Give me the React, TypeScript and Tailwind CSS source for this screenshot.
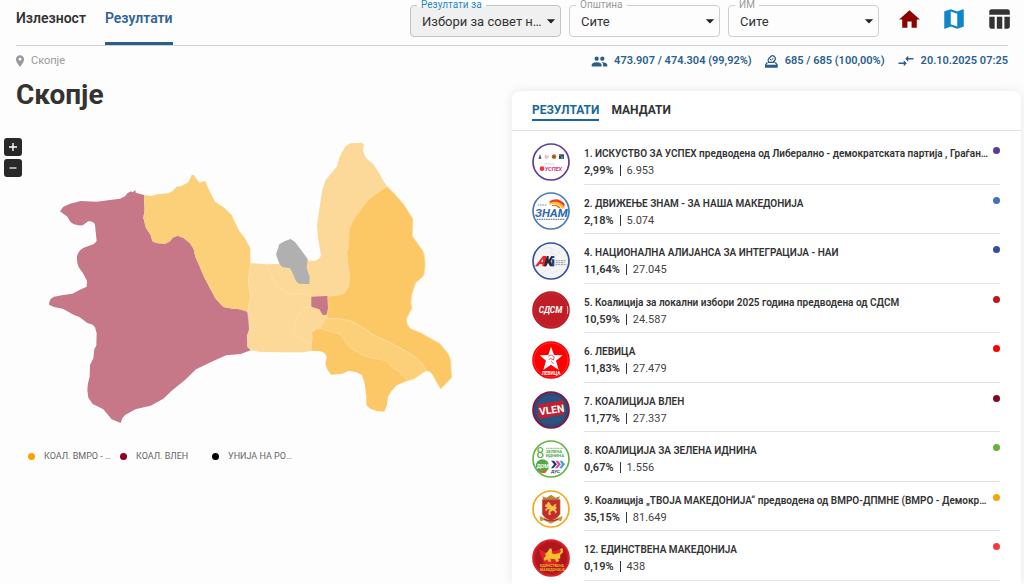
import type { ReactNode } from "react";
import {
  MdArrowDropDown,
  MdCompareArrows,
  MdHome,
  MdLocationOn,
  MdMap,
  MdPeople,
  MdTableChart,
} from "react-icons/md";

type FilterProps = {
  id: string;
  label: string;
  value: string;
  active?: boolean;
};

function Filter({ id, label, value, active = false }: FilterProps) {
  return (
    <div className="relative w-[151px]">
      <label
        htmlFor={id}
        className={`absolute -top-2 left-[7px] px-1 text-[10px] leading-4 ${
          active ? "text-[#1c87c9]" : "text-[#9a9a9a]"
        }`}
      >
        <span className="absolute inset-x-0 top-[7px] h-[3px] bg-[#fdfdfd]" />
        <span className="relative">{label}</span>
      </label>
      <select
        id={id}
        className={`block h-8 w-full appearance-none text-ellipsis rounded border pl-[11px] pr-[18px] pt-[2px] text-[13px] text-[#333] ${
          active ? "border-[#c4c4c4] bg-[#f0f0f0]" : "border-[#cfcfcf] bg-[#fdfdfd]"
        }`}
      >
        <option>{value}</option>
      </select>
      <MdArrowDropDown
        size={20}
        className="pointer-events-none absolute right-0 top-[6px] text-[#222]"
      />
    </div>
  );
}

function BallotIcon() {
  return (
    <svg viewBox="0 0 45 45" className="size-[15px]" fill="none" stroke="currentColor" strokeWidth="4">
      <path d="M14 25Q10 19 14 14L22 6Q26 3 30 7L33 10Q36 14 33 18L27 25" />
      <path strokeWidth="3" d="M18 15L22 19L28 12" />
      <path d="M10 25L5 33V35H39V33L34 25" />
      <path d="M12 25H32" />
      <path fill="currentColor" d="M5 34H39V39H5Z" />
    </svg>
  );
}

function Stat({ icon, children }: { icon: ReactNode; children: ReactNode }) {
  return (
    <div className="flex items-center gap-[6px]">
      {icon}
      <span>{children}</span>
    </div>
  );
}

function RegionMap() {
  return (
    <svg
      viewBox="0 0 1320 900"
      role="img"
      aria-label="Скопје"
      className="ml-[30px] block w-[440px] max-w-full"
      strokeLinejoin="round"
    >
      <path
        fill="#c67788"
        d="M90 244L100 230L120 221L152 213L200 215L240 210L270 206L285 199L293 189L303 184L308 187L316 180L317 188L342 195L344 240L340 263L348 294L362 315L367 333L378 339L405 341L418 335L430 322L444 317L462 325L480 340L491 357L496 380L508 407L522 440L540 475L557 506L580 531L600 535L630 538L653 545L658 575L657 600L652 618L653 648L662 661L632 672L588 676L545 695L498 718L465 750L425 782L400 806L362 827L318 837L285 855L277 865L272 879L245 868L220 838L188 822L175 803L172 780L174 760L179 740L180 705L190 685L193 657L199 647L200 610L195 592L188 584L172 579L148 561L132 555L98 536L72 531L57 524Q58 505 72 500L95 496L127 491L150 479L170 470L171 452L158 428L146 412Q138 390 142 375Q148 358 165 352L192 342L200 333L195 285Q192 273 175 274L158 286Q130 288 120 274L112 260Z"
      />
      <path
        fill="#fccf79"
        d="M342 195L363 198L382 193L415 190L428 183L440 170L455 168L476 156L485 135L491 135L508 158L526 153L536 178L555 215L580 231L605 255L627 302L645 325L661 355L661 400L655 455L661 500L658 535L653 545L630 538L600 535L580 531L557 506L540 475L522 440L508 407L496 380L491 357L480 340L462 325L444 317L430 322L418 335L405 341L378 339L367 333L362 315L348 294L340 263L344 240Z"
      />
      <g transform="translate(600 0)">
        <path
          fill="#fcd999"
          d="M61 399L108 403L145 402L233 391L250 393Q270 390 273 375L264 325L261 285L272 210L277 180L287 150L320 110L328 82L345 50Q355 40 370 39L396 38L403 44L399 52Q398 70 412 88L430 103L447 128L455 145L472 170L400 300L380 480L300 560L272 597L250 600L247 630L243 663L220 667L150 667L90 665L62 661L53 652L52 615L59 600L57 560L53 545L61 500L55 455Z"
        />
        <path
          fill="#fcc866"
          stroke="#fddc9f"
          strokeWidth="2"
          d="M472 170L495 193L520 222L549 267L547 318L578 362Q585 375 585 400Q586 435 575 443L557 458L545 495L543 518L546 535L531 563Q527 585 542 596L575 610L630 641L655 672L662 690L665 743L632 777L622 760L608 735L600 725L588 722L575 700Q560 682 535 668L490 643L430 615L400 593L365 574L330 567L290 565L294 540L293 499Q320 497 342 491Q352 480 358 462L359 430L353 400L351 365L355 350L358 295Q375 255 420 205Q440 188 472 170Z"
        />
        <path
          fill="#fccf79"
          stroke="#fddc9f"
          strokeWidth="2"
          d="M290 565L330 567L365 574L400 593L430 615L490 643L535 668Q560 682 575 700L588 722L550 748L532 752L510 728L485 712L470 693L435 686L405 680L360 655L330 615L315 609L272 597Q275 580 290 565Z"
        />
        <path
          fill="#fcc866"
          d="M272 597Q255 595 247 607L247 630L243 662L265 663Q288 665 290 682L286 700Q290 722 304 734L338 731L355 722L380 727L395 735L403 755L409 800L409 825L418 835L440 843L463 845L470 828L474 800L485 782L500 766L532 752L510 728L485 712L470 693L435 686L405 680L360 655L330 615L315 609Z"
        />
        <path
          fill="#b0b0b0"
          d="M182 327L195 336L215 362L233 387L230 415L239 440L238 462L208 461Q200 458 195 447L186 425L180 415L157 411Q147 405 138 373L148 343L165 333Z"
        />
        <path
          fill="#c67788"
          d="M244 500L292 498L294 535L290 554L278 555L268 538L244 530Z"
        />
        <path
          fill="none"
          stroke="#fde2b1"
          strokeWidth="2"
          d="M108 403L122 432Q140 470 155 479L178 491L220 490L244 500M244 530L220 535Q205 545 203 560L190 595Q188 612 205 622L243 640M61 399L55 455L61 500L53 545L59 600L52 615L53 652"
        />
      </g>
    </svg>
  );
}

const logoText = "font-['Roboto'] font-bold";

function Badge({ fill, ring, children }: { fill: string; ring: string; children: ReactNode }) {
  return (
    <svg viewBox="0 0 114 114" className="mt-1 size-[38px] shrink-0" aria-hidden="true">
      <circle cx="57" cy="57" r="54" fill={fill} stroke={ring} strokeWidth="5" />
      {children}
    </svg>
  );
}

const lion =
  "M38 35L43 27L50 30L53 39L61 43L68 35L75 38L70 43L76 49L70 57L77 64L70 72L68 64L59 59L51 66L54 75L45 76L44 64L50 55L40 56L35 63L32 55L42 48L33 46L31 40Z";

const badges: Record<string, ReactNode> = {
  uspeh: (
    <Badge fill="#fff" ring="#5b3a9b">
      <path fill="#55608a" d="M20 44L24 33L28 44V48H20Z" />
      <circle cx="44" cy="41" r="6" fill="#e9a4aa" />
      <path stroke="#fff" strokeWidth="2" fill="none" d="M48 38H43V44H47" />
      <circle cx="66" cy="41" r="7" fill="#c96f25" />
      <circle cx="66" cy="41" r="3" fill="#763e24" />
      <path fill="#26445e" d="M81 34H96V48H81Z" />
      <path fill="#d53e4b" d="M81 34H88V39H81Z" />
      <path fill="#39a4bd" d="M88 40H94V47H85Z" />
      <path stroke="#c8bfdd" strokeWidth="3" strokeDasharray="4 2" d="M37 63H68" />
      <circle cx="30" cy="77" r="7" fill="#ed3545" />
      <text x="38" y="83" fontSize="17" fontStyle="italic" fill="#da3183" className={logoText}>УСПЕХ</text>
    </Badge>
  ),
  znam: (
    <Badge fill="#fff" ring="#4878bc">
      <path fill="#ef3e2e" d="M52 28Q76 12 98 35L96 50Q79 25 54 34Z" />
      <path fill="#ffc623" d="M53 33Q79 22 97 46L92 51Q75 31 51 38Z" />
      <path fill="#ed5a23" d="M59 39Q76 35 88 50L80 48Q72 40 60 42Z" />
      <path stroke="#7392c1" strokeWidth="3" strokeDasharray="5 2" d="M17 39H45" />
      <text x="9" y="74" fontSize="35" fontStyle="italic" fill="#3169ad" className={logoText}>ЗНАМ</text>
      <path stroke="#6689bb" strokeWidth="4" strokeDasharray="5 2" d="M14 82H99" />
    </Badge>
  ),
  nai: (
    <Badge fill="#f4f4f5" ring="#3650a0">
      <path fill="none" stroke="#dfe1e6" strokeWidth="2" d="M30 24Q45 12 62 20L55 32L72 40L84 28M31 94L48 80L61 95L79 83" />
      <path fill="#e7232b" d="M9 73L33 42H42V73H31V66H23L18 73Z" />
      <path fill="#f4f4f5" d="M27 59L33 51V59Z" />
      <path fill="#292831" d="M44 42H50V54L58 42H66L56 57L63 73H54L48 62L43 73H36Z" />
      <path fill="#293f92" d="M59 52H67V73H59ZM59 42H67V48H59Z" />
      <path stroke="#9b9ba3" strokeWidth="3" strokeDasharray="6 2" d="M71 56H101M71 62H98M71 68H104" />
    </Badge>
  ),
  sdsm: (
    <Badge fill="#c01d27" ring="#b91c27">
      <circle cx="57" cy="57" r="50" fill="none" stroke="#d24a4c" strokeWidth="1" />
      <text x="20" y="67" fontSize="25" fontStyle="italic" fill="#fff" className={logoText}>СДСМ</text>
      <path stroke="#f0b9bb" strokeWidth="3" fill="none" d="M106 45Q109 57 106 69" />
    </Badge>
  ),
  levica: (
    <Badge fill="#fe0000" ring="#f90000">
      <circle cx="57" cy="57" r="51" fill="none" stroke="#ff8c8c" strokeWidth="1" />
      <path fill="#fff" d="M57 17L66 42L92 43L72 59L80 87L57 71L34 87L42 59L23 43L49 42Z" />
      <path fill="none" stroke="#f00" strokeWidth="2" d="M49 46L58 42L67 48L64 57L55 52L50 57M57 61L65 68" />
      <text x="29" y="101" fontSize="14" fill="#fff" className={logoText}>ЛЕВИЦА</text>
    </Badge>
  ),
  vlen: (
    <Badge fill="#294b7b" ring="#8c1230">
      <circle cx="57" cy="57" r="44" fill="#315987" opacity=".5" />
      <path fill="#c3202f" d="M17 41L94 28L97 70L20 84Z" />
      <text x="21" y="68" fontSize="31" fill="#fff" transform="rotate(-8 57 57)" className={logoText}>VLEN</text>
    </Badge>
  ),
  zelena: (
    <Badge fill="#fff" ring="#65b33e">
      <text x="13" y="53" fontSize="42" fill="#55ad42" className="font-['Roboto']">8</text>
      <path stroke="#81c36c" strokeWidth="3" strokeDasharray="4 1" d="M42 25H94" />
      <text x="41" y="39" fontSize="13" fill="#4da84b" className={logoText}>ЗЕЛЕНА</text>
      <text x="41" y="51" fontSize="13" fill="#4da84b" className={logoText}>ИДНИНА</text>
      <circle cx="31" cy="78" r="20" fill="#55a849" />
      <text x="14" y="84" fontSize="16" fill="#fff" className={logoText}>ДОМ</text>
      <path fill="#e25c32" d="M22 94L45 91L40 99L29 99Z" />
      <path fill="#263b83" d="M57 62H66L75 73L64 85H57L66 73Z" />
      <path fill="#dd4b9b" d="M70 62H78L87 73L76 85H69L78 73Z" />
      <path fill="#25a8d8" d="M83 62H90L99 73L89 85H82L90 73Z" />
      <text x="57" y="99" fontSize="13" fill="#273b78" className={logoText}>ДУС</text>
    </Badge>
  ),
  vmro: (
    <Badge fill="#fff" ring="#f7a719">
      <path fill="#b88936" d="M31 19L43 23L57 14L71 23L84 19L80 29H34Z" />
      <path fill="#c62a31" stroke="#a56b29" strokeWidth="2" d="M31 29H84V72Q78 85 57 92Q36 85 31 72Z" />
      <g transform="translate(14 14) scale(.8)"><path fill="#f1c44a" d={lion} /></g>
      <path fill="#c39647" d="M23 78L35 83L57 94L79 83L92 78L88 94L77 91L57 101L36 91L25 94Z" />
      <path stroke="#b83231" strokeWidth="4" fill="none" d="M36 87Q57 98 79 87" />
    </Badge>
  ),
  edinstvena: (
    <Badge fill="#cc1820" ring="#d92328">
      <circle cx="57" cy="57" r="47" fill="#8e1519" opacity=".5" />
      <path fill="#e12229" d="M20 31L47 42L94 28L84 58L70 82L36 75Z" />
      <path fill="#f2c12c" d="M35 58L42 51L39 45L47 38L51 31L57 27L61 36L59 42L66 46L83 42L87 35L83 30L92 28L93 40L84 48L85 58L78 60L82 66L73 69L68 60L55 59L58 68H49L46 61L38 66Z" />
      <text x="24" y="84" fontSize="11" fill="#f1b52d" className={logoText}>ЕДИНСТВЕНА</text>
      <text x="24" y="95" fontSize="11" fill="#f1b52d" className={logoText}>МАКЕДОНИЈА</text>
    </Badge>
  ),
};

const results = [
  { badge: "uspeh", name: "1. ИСКУСТВО ЗА УСПЕХ предводена од Либерално - демократската партија , Граѓанска опција", share: "2,99%", votes: "6.953", dot: "bg-[#5b3a9b]" },
  { badge: "znam", name: "2. ДВИЖЕЊЕ ЗНАМ - ЗА НАША МАКЕДОНИЈА", share: "2,18%", votes: "5.074", dot: "bg-[#4472b8]" },
  { badge: "nai", name: "4. НАЦИОНАЛНА АЛИЈАНСА ЗА ИНТЕГРАЦИЈА - НАИ", share: "11,64%", votes: "27.045", dot: "bg-[#314ca0]" },
  { badge: "sdsm", name: "5. Коалиција за локални избори 2025 година предводена од СДСМ", share: "10,59%", votes: "24.587", dot: "bg-[#c0141f]" },
  { badge: "levica", name: "6. ЛЕВИЦА", share: "11,83%", votes: "27.479", dot: "bg-[#fb0000]" },
  { badge: "vlen", name: "7. КОАЛИЦИЈА ВЛЕН", share: "11,77%", votes: "27.337", dot: "bg-[#850526]" },
  { badge: "zelena", name: "8. КОАЛИЦИЈА ЗА ЗЕЛЕНА ИДНИНА", share: "0,67%", votes: "1.556", dot: "bg-[#65b337]" },
  { badge: "vmro", name: "9. Коалиција „ТВОЈА МАКЕДОНИЈА“ предводена од ВМРО-ДПМНЕ (ВМРО - Демократска партија)", share: "35,15%", votes: "81.649", dot: "bg-[#f7a600]" },
  { badge: "edinstvena", name: "12. ЕДИНСТВЕНА МАКЕДОНИЈА", share: "0,19%", votes: "438", dot: "bg-[#f43b3b]" },
];

const legend = [
  { name: "КОАЛ. ВМРО - ДПМНЕ", dot: "bg-[#f9a100]" },
  { name: "КОАЛ. ВЛЕН", dot: "bg-[#8d0020]" },
  { name: "УНИЈА НА РОМИТЕ", dot: "bg-black" },
];

export default function App() {
  return (
    <div className="flex h-screen flex-col overflow-hidden bg-[#fdfdfd] font-['Roboto',sans-serif] text-[#333]">
      <header className="mx-4 flex h-[46px] shrink-0 border-b border-[#d0d0d0]">
        <nav className="flex gap-[19px] text-sm font-semibold">
          <a href="#turnout" className="flex h-[45px] items-center pb-[9px]">Излезност</a>
          <a href="#results" className="flex h-[45px] items-center border-b-[3px] border-[#2a5d8f] pb-[6px] text-[#2f6496]">Резултати</a>
        </nav>
        <div className="ml-auto flex items-start gap-2 pt-[5px]">
          <Filter id="type" label="Резултати за" value="Избори за совет на општина" active />
          <Filter id="municipality" label="Општина" value="Сите" />
          <Filter id="station" label="ИМ" value="Сите" />
        </div>
        <div className="ml-[17px] flex h-[38px] items-center gap-[19px]">
          <button type="button" aria-label="Почетна" className="flex w-[26px] justify-center text-[#8b0000]"><MdHome size={25} /></button>
          <button type="button" aria-label="Мапа" className="flex w-[26px] justify-center text-[#0d87ca]"><MdMap size={26} /></button>
          <button type="button" aria-label="Табела" className="-mr-1 flex w-[26px] justify-center text-[#333]"><MdTableChart size={26} /></button>
        </div>
      </header>

      <div className="mx-4 flex h-[30px] shrink-0 items-center justify-between">
        <div className="flex items-center gap-1 text-[11px] text-[#999]">
          <MdLocationOn size={14} className="-ml-[3px]" />
          <span>Скопје</span>
        </div>
        <div className="flex gap-3 text-[11px] font-semibold text-[#2a5f8f]">
          <Stat icon={<MdPeople size={17} />}>473.907 / 474.304 (99,92%)</Stat>
          <Stat icon={<BallotIcon />}>685 / 685 (100,00%)</Stat>
          <Stat icon={<MdCompareArrows size={18} />}>20.10.2025 07:25</Stat>
        </div>
      </div>

      <main className="flex min-h-0 flex-1">
        <section className="w-1/2 shrink-0">
          <h1 className="ml-4 pt-px text-[28px] font-bold leading-9">Скопје</h1>
          <div className="relative mt-[17px]">
            <div className="absolute left-1 top-2 z-10 flex flex-col gap-[3px]">
              <button type="button" aria-label="Зголеми" className="flex size-[18px] items-center justify-center rounded-[3px] bg-[#292929] text-white">
                <svg viewBox="0 0 10 10" className="size-[10px]"><path stroke="currentColor" strokeWidth="1.4" d="M5 1V9M1 5H9" /></svg>
              </button>
              <button type="button" aria-label="Намали" className="flex size-[18px] items-center justify-center rounded-[3px] bg-[#292929] text-white">
                <svg viewBox="0 0 10 10" className="size-[10px]"><path stroke="currentColor" strokeWidth="1.2" d="M1.5 5H8.5" /></svg>
              </button>
            </div>
            <RegionMap />
          </div>
          <ul className="ml-7 mt-[18px] flex text-[9px] leading-4 text-[#666]">
            {legend.map((item) => (
              <li key={item.name} className="flex w-[92px] items-center gap-[9px]">
                <span className={`size-[7px] shrink-0 rounded-full ${item.dot}`} />
                <span className="w-[67px] truncate">{item.name}</span>
              </li>
            ))}
          </ul>
        </section>

        <section className="mr-[3px] mt-[15px] min-w-0 flex-1 rounded-t-lg bg-white shadow-[0_0_12px_rgba(0,0,0,0.09)]">
          <div className="flex h-10 items-center gap-3 border-b border-[#e2e2e2] pl-5 text-[12px] font-bold">
            <button type="button" className="border-b-2 border-[#17699c] pt-px leading-[17px] text-[#17699c]">РЕЗУЛТАТИ</button>
            <button type="button" className="border-b-2 border-transparent pt-px leading-[17px]">МАНДАТИ</button>
          </div>
          <ol className="mt-1 grid h-[446px] auto-rows-fr grid-cols-1 pl-5 pr-[21px]">
            {results.map((party) => (
              <li key={party.badge} className="flex min-w-0 items-center gap-[14px]">
                {badges[party.badge]}
                <div className="flex h-full min-w-0 flex-1 items-start border-b border-[#e2e2e2] pt-[10px]">
                  <div className="min-w-0 flex-1">
                    <h2 className="truncate text-[10px] font-semibold leading-[17px]">{party.name}</h2>
                    <p className="flex items-center text-[11px] leading-[17px]">
                      <b className="font-semibold">{party.share}</b>
                      <span className="mx-[6px] h-[11px] w-px bg-[#333]" />
                      <span className="text-[#444]">{party.votes}</span>
                    </p>
                  </div>
                  <span className={`ml-1 mt-[2px] size-[7px] shrink-0 rounded-full ${party.dot}`} />
                </div>
              </li>
            ))}
          </ol>
        </section>
      </main>
    </div>
  );
}
